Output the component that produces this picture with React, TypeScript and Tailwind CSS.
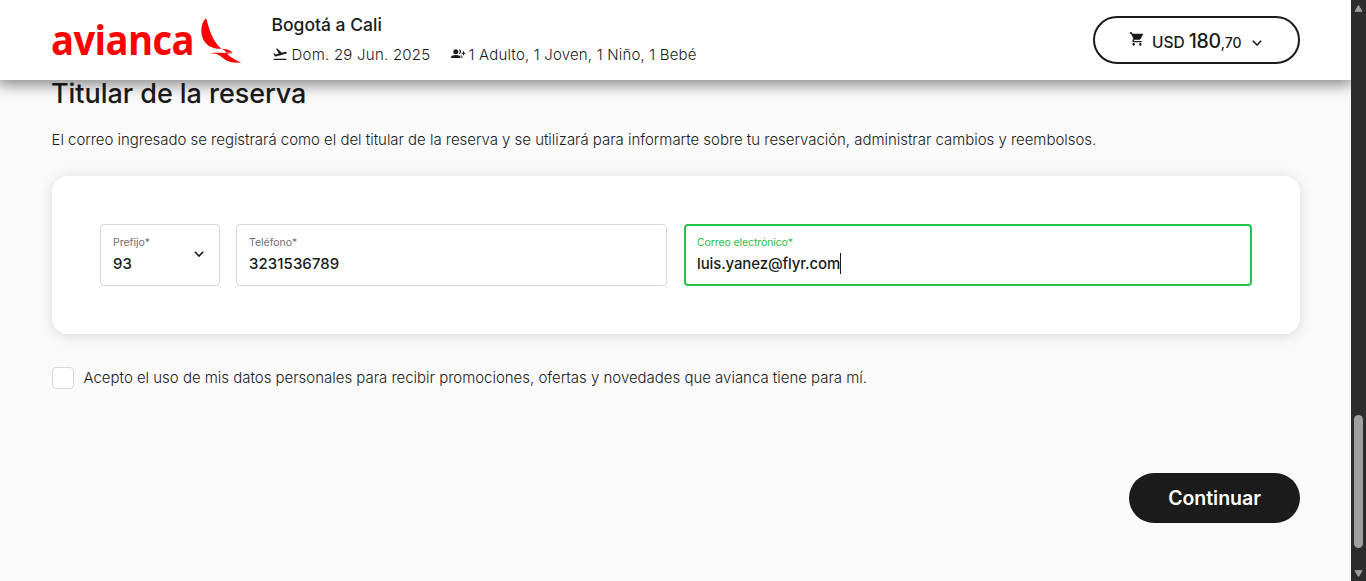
import React from "react";
import { MdFlightTakeoff, MdShoppingCart } from "react-icons/md";

function Chevron({ className, w = 1.6 }: { className?: string; w?: number }) {
  return (
    <svg viewBox="0 0 10 6" className={className} fill="none" stroke="#1b1b1b" strokeWidth={w}>
      <path d="M0.8 0.8 L5 5 L9.2 0.8" />
    </svg>
  );
}

function Header() {
  return (
    <header className="relative z-10 flex h-20 shrink-0 bg-white pl-[51px] pr-[51px] shadow-[0_3px_14px_2px_rgba(0,0,0,0.45)]">
      <div className="flex w-[220.5px] shrink-0">
        <span className="h-[58px] w-[149px] origin-left scale-x-[0.91] whitespace-nowrap pt-[10px] font-['Open_Sans'] text-[42px] font-bold leading-[58px] tracking-[-0.7px] text-[#ff0000]">
          avianca
        </span>
        <svg viewBox="0 0 42 46" className="mt-[18px] h-[46px] w-[42px] shrink-0" fill="#ff0000">
          <path d="M6 0 C3 3 1.300 7.500 1.300 13 C1.500 21 5.500 26.500 11 29 C14.500 30.500 18 31 21.300 30.800 C15.500 25.500 12 19 10 13 C8.500 8.500 7.500 4.500 6 0 Z" />
          <path d="M21.300 30.800 C26 30.700 30.500 32 32.800 34.800 L25.500 34.400 C26 33 24 31.500 21.300 30.800 Z" />
          <path d="M9 35 C16 34.400 25 34.600 32.500 35.200 L27 36 C31 39.500 36 42.500 41.300 44.800 C33 45.200 27.500 44 23.500 40.500 C20.500 38 18 36.500 16 35.800 Z" />
        </svg>
      </div>
      <div className="flex flex-col pt-[14px]">
        <h2 className="whitespace-nowrap text-[17.5px] font-medium leading-[22px]">Bogotá a Cali</h2>
        <div className="mt-2 flex h-[22px] items-center whitespace-nowrap text-[15px] font-light leading-[22px]">
          <MdFlightTakeoff className="-mt-[3px] mr-1 size-4" />
          <span className="w-[159px] tracking-[0.24px]">Dom. 29 Jun. 2025</span>
          <svg viewBox="0 0 15 10" className="-mt-[2px] mr-[3px] h-[10px] w-[15px]" fill="#1b1b1b">
            <circle cx="4.800" cy="2.700" r="2.500" />
            <path d="M0 9 V8 C0 5.300 9.600 5.300 9.600 8 V9 Z" />
            <path d="M7.700 0.300 A2.400 2.400 0 0 1 7.700 5.100 A3.600 3.600 0 0 0 7.700 0.300 Z" />
            <path d="M9.300 6 C10.800 6.400 11.500 7.200 11.500 8 V9 H10.500 V8 C10.500 7.200 10 6.500 9.300 6 Z" />
            <path d="M12 2.200 H13 V3.700 H14.500 V4.700 H13 V6.200 H12 V4.700 H10.500 V3.700 H12 Z" />
          </svg>
          <span className="tracking-[0.18px]">1 Adulto, 1 Joven, 1 Niño, 1 Bebé</span>
        </div>
      </div>
      <button className="ml-auto mt-4 flex h-12 w-[207px] rounded-full border-2 border-[#1b1b1b] pl-[34px]">
        <MdShoppingCart className="mt-[13px] size-4" />
        <span className="ml-[7px] flex items-baseline whitespace-nowrap pt-[9px] leading-[28px]">
          <span className="text-[15.5px] font-medium">USD</span>
          <span className="ml-1 text-[19.5px] font-medium tracking-[-0.3px]">180</span>
          <span className="text-[14px] font-medium">,70</span>
        </span>
        <Chevron className="ml-[10px] mt-[22px] h-[6px] w-[10px]" />
      </button>
    </header>
  );
}

function Scrollbar() {
  return (
    <div className="flex h-[581px] w-[15px] shrink-0 flex-col items-center bg-[#2c2c2c]">
      <svg viewBox="0 0 15 415" className="h-[415px] w-[15px]" fill="#9f9f9f">
        <path d="M7.500 5.500 L11 11.300 H4 Z" stroke="#9f9f9f" strokeLinejoin="round" />
      </svg>
      <div className="h-[133px] w-[9px] rounded-full bg-[#9f9f9f]" />
      <svg viewBox="0 0 15 33" className="h-[33px] w-[15px]" fill="#9f9f9f">
        <path d="M7.500 28.500 L11 22.700 H4 Z" stroke="#9f9f9f" strokeLinejoin="round" />
      </svg>
    </div>
  );
}

export default function App() {
  return (
    <div className="flex h-[581px] w-[1366px] overflow-hidden bg-[#fafafa] font-[Inter,sans-serif] text-[#1b1b1b]">
      <div className="flex w-[1351px] flex-col overflow-hidden">
        <Header />
        <main className="flex flex-col pl-[52px] pr-[51px]">
          <h1 className="-ml-px -mt-1 whitespace-nowrap text-[27px] font-medium leading-[36px] tracking-[-0.05px]">Titular de la reserva</h1>
          <p className="-ml-[0.5px] mt-[16px] whitespace-nowrap text-[15px] font-light leading-6 tracking-[-0.034px]">
            El correo ingresado se registrará como el del titular de la reserva y se utilizará para informarte sobre tu reservación, administrar cambios y reembolsos.
          </p>
          <section className="mt-6 flex h-[158px] rounded-2xl bg-white px-12 pt-12 shadow-[0_2px_14px_rgba(0,0,0,0.13)]">
            <div className="flex h-[62px] w-[120px] shrink-0 justify-between rounded-[4px] border border-[#d8d8d8] pl-3">
              <div>
                <div className="mt-[11px] text-[10.5px] leading-[14px] text-[#6e6e6e]">Prefijo*</div>
                <div className="mt-1 text-[15px] font-medium leading-[20px]">93</div>
              </div>
              <Chevron className="mr-[15px] mt-[26px] h-[6px] w-[10px]" />
            </div>
            <div className="ml-4 h-[62px] w-[431px] shrink-0 rounded-[4px] border border-[#d8d8d8] pl-3">
              <div className="mt-[11px] text-[10.5px] leading-[14px] text-[#6e6e6e]">Teléfono*</div>
              <div className="mt-1 text-[15px] font-medium leading-[20px] tracking-[0.07px]">3231536789</div>
            </div>
            <div className="ml-[17px] h-[62px] w-[568px] shrink-0 rounded-[4px] border-2 border-[#27c24c] pl-[11px]">
              <div className="mt-[10px] text-[10.5px] leading-[14px] tracking-[-0.1px] text-[#27c24c]">Correo electrónico*</div>
              <div className="mt-1 flex h-5 text-[15px] font-medium leading-[20px]">
                <span className="tracking-[-0.13px]">luis.yanez@flyr.com</span>
                <span className="h-[21px] w-px shrink-0 -translate-y-px bg-[#1b1b1b]" />
              </div>
            </div>
          </section>
          <label className="mt-[33px] flex h-[22px] items-center whitespace-nowrap text-[15px] font-light tracking-[-0.022px]">
            <span className="mr-[9.500px] size-[22px] rounded-[4px] border border-[#d8d8d8] bg-white" />
            Acepto el uso de mis datos personales para recibir promociones, ofertas y novedades que avianca tiene para mí.
          </label>
          <button className="ml-auto mt-[84px] h-[50px] w-[171px] rounded-full bg-[#1b1b1b] pt-[2px] text-[19.5px] font-semibold tracking-[-0.03px] text-white">
            Continuar
          </button>
        </main>
      </div>
      <Scrollbar />
    </div>
  );
}
